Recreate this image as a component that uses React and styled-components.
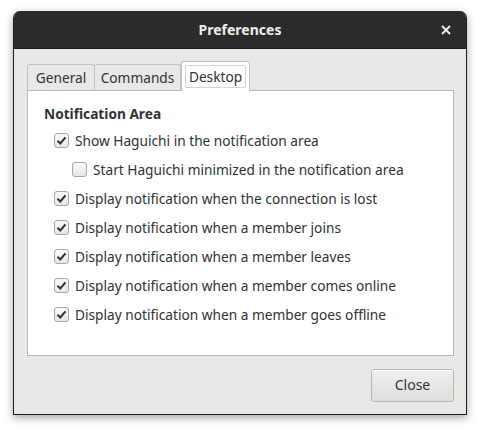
import React from "react";
import styled, { createGlobalStyle } from "styled-components";

const GlobalStyle = createGlobalStyle`
  html, body {
    margin: 0;
    padding: 0;
    background: #ffffff;
  }
  body {
    font-family: "Noto Sans", "Open Sans", sans-serif;
    color: #2e3436;
  }
`;

const Page = styled.div`
  width: 480px;
  height: 431px;
  padding: 11px 0 0 13px;
  box-sizing: border-box;
`;

const Window = styled.div`
  width: 454px;
  height: 404px;
  display: flex;
  flex-direction: column;
  background: #e8e8e7;
  border: 1px solid #1f1f1f;
  border-top: none;
  border-radius: 7px 7px 0 0;
  box-sizing: border-box;
  box-shadow: 0 3px 9px rgba(0, 0, 0, 0.35);
  overflow: hidden;
`;

const TitleBar = styled.div`
  height: 37px;
  flex: none;
  display: flex;
  align-items: center;
  justify-content: center;
  position: relative;
  background: #2b2b2b;
  color: #eeeeec;
  font-weight: bold;
  font-size: 14px;
  border-bottom: 1px solid #1b1b1b;
`;

const CloseX = styled.button`
  position: absolute;
  right: 12px;
  top: 11px;
  width: 16px;
  height: 16px;
  padding: 0;
  border: none;
  background: transparent;
  display: flex;
  align-items: center;
  justify-content: center;
`;

const Body = styled.div`
  flex: 1;
  display: flex;
  flex-direction: column;
  padding: 12px 12px 12px 13px;
`;

const TabRow = styled.div`
  display: flex;
  align-items: flex-end;
  height: 30px;
  margin-bottom: -1px;
  position: relative;
  z-index: 1;
`;

const Tab = styled.div`
  width: ${(p) => p.$width}px;
  height: ${(p) => (p.$active ? "30px" : "27px")};
  box-sizing: border-box;
  display: flex;
  align-items: center;
  justify-content: center;
  font-size: 13.7px;
  border: 1px solid #c2c2c0;
  border-bottom: ${(p) => (p.$active ? "none" : "1px solid #b8b8b6")};
  border-left: ${(p) => (p.$first || p.$active ? "1px solid #c2c2c0" : "none")};
  border-radius: 3px 3px 0 0;
  background: ${(p) => (p.$active ? "#ffffff" : "#e8e8e7")};
  color: #2e3436;
`;

const TabLabel = styled.span`
  padding: 1px 3px;
  border: ${(p) => (p.$focus ? "1px solid #d6d6d4" : "1px solid transparent")};
  border-radius: 2px;
  background: ${(p) => (p.$focus ? "#ffffff" : "transparent")};
`;

const Panel = styled.div`
  height: 266px;
  box-sizing: border-box;
  background: #ffffff;
  border: 1px solid #b8b8b6;
  padding: 12px 16px;
  display: flex;
  flex-direction: column;
`;

const Heading = styled.div`
  font-weight: bold;
  font-size: 13.7px;
  height: 22px;
  line-height: 22px;
  margin-bottom: 1px;
`;

const Row = styled.label`
  display: flex;
  align-items: center;
  gap: 6px;
  height: 29px;
  padding-left: ${(p) => (p.$indent ? "28px" : "10px")};
  font-size: 13.7px;
`;

const Box = styled.span`
  width: 15px;
  height: 15px;
  flex: none;
  box-sizing: border-box;
  border: 1px solid #a8a8a6;
  border-radius: 3px;
  background: linear-gradient(#fafafa, #e6e6e5);
  display: flex;
  align-items: center;
  justify-content: center;
`;

const Footer = styled.div`
  flex: 1;
  display: flex;
  justify-content: flex-end;
  align-items: flex-end;
`;

const Button = styled.button`
  width: 83px;
  height: 33px;
  padding: 0 0 2px;
  font-family: inherit;
  font-size: 14px;
  color: #2e3436;
  border: 1px solid #b6b6b3;
  border-radius: 3px;
  background: linear-gradient(#efefee, #dededd);
  box-shadow: inset 0 1px #ffffff;
`;

const Check = () => (
  <svg width="11" height="11" viewBox="0 0 11 11">
    <path d="M1.5 5.8 L4.3 8.5 L9.5 2.3" fill="none" stroke="#2e3436" strokeWidth="2" />
  </svg>
);

const Checkbox = ({ checked }) => <Box>{checked && <Check />}</Box>;

const options = [
  { text: "Show Haguichi in the notification area", checked: true },
  { text: "Start Haguichi minimized in the notification area", checked: false, indent: true },
  { text: "Display notification when the connection is lost", checked: true },
  { text: "Display notification when a member joins", checked: true },
  { text: "Display notification when a member leaves", checked: true },
  { text: "Display notification when a member comes online", checked: true },
  { text: "Display notification when a member goes offline", checked: true },
];

export default function App() {
  return (
    <Page>
      <GlobalStyle />
      <Window>
        <TitleBar>
          Preferences
          <CloseX aria-label="Close">
            <svg width="10" height="10" viewBox="0 0 10 10">
              <path d="M1 1 L9 9 M9 1 L1 9" stroke="#eeeeec" strokeWidth="2" />
            </svg>
          </CloseX>
        </TitleBar>
        <Body>
          <TabRow>
            <Tab $first $width={68}>
              <TabLabel>General</TabLabel>
            </Tab>
            <Tab $width={86}>
              <TabLabel>Commands</TabLabel>
            </Tab>
            <Tab $active $width={69}>
              <TabLabel $focus>Desktop</TabLabel>
            </Tab>
          </TabRow>
          <Panel>
            <Heading>Notification Area</Heading>
            {options.map((o) => (
              <Row key={o.text} $indent={o.indent}>
                <Checkbox checked={o.checked} />
                {o.text}
              </Row>
            ))}
          </Panel>
          <Footer>
            <Button>Close</Button>
          </Footer>
        </Body>
      </Window>
    </Page>
  );
}
